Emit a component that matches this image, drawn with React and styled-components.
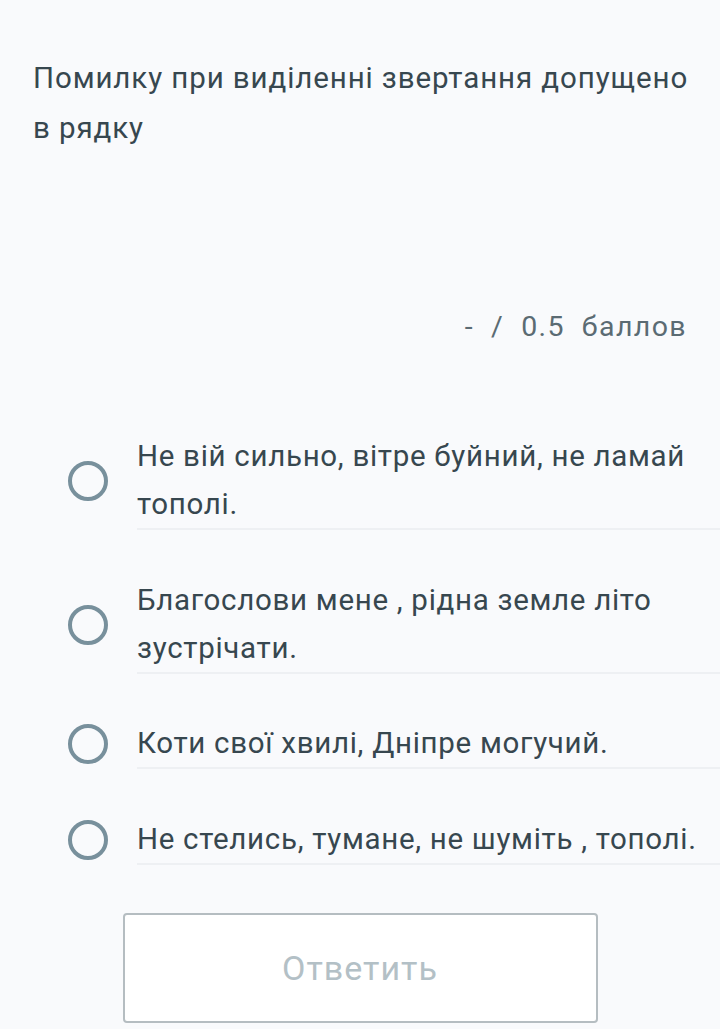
import styled, { createGlobalStyle } from "styled-components";

const GlobalStyle = createGlobalStyle`
  html, body {
    margin: 0;
    padding: 0;
    background: #f9fafc;
  }
  body {
    font-family: Roboto, "Noto Sans", sans-serif;
    -webkit-font-smoothing: antialiased;
  }
`;

const Page = styled.div`
  width: 720px;
  min-height: 1029px;
  background: #f9fafc;
  overflow: hidden;
`;

const Question = styled.div`
  padding: 53px 28px 0 33px;
  font-size: 29.5px;
  line-height: 50px;
  letter-spacing: 0.9px;
  color: #37474f;
`;

const Points = styled.div`
  margin-top: 149px;
  padding-right: 33px;
  text-align: right;
  font-size: 28.5px;
  line-height: 50px;
  letter-spacing: 1.4px;
  white-space: pre;
  color: #5b6b73;
`;

const Options = styled.div`
  margin-top: 80px;
  display: flex;
  flex-direction: column;
  gap: 45.5px;
`;

const Option = styled.label`
  display: flex;
  align-items: center;
  cursor: pointer;
`;

const RadioBox = styled.div`
  width: 137px;
  flex-shrink: 0;
  display: flex;
  padding-left: 68px;
  box-sizing: border-box;
`;

const Radio = styled.span`
  width: 40px;
  height: 40px;
  box-sizing: border-box;
  border-radius: 50%;
  border: 4px solid #78909c;
`;

const OptionText = styled.div`
  flex: 1;
  padding-right: 12px;
  font-size: 29.5px;
  line-height: 48px;
  letter-spacing: 0.7px;
  color: #37474f;
  border-bottom: 2px solid #eef0f3;
`;

const ButtonRow = styled.div`
  display: flex;
  justify-content: center;
  margin-top: 48px;
`;

const SubmitButton = styled.button`
  width: 475px;
  height: 110px;
  background: #ffffff;
  border: 2px solid #b5bdc1;
  border-radius: 4px;
  font-family: Roboto, "Noto Sans", sans-serif;
  font-size: 34px;
  letter-spacing: 1px;
  color: #b3c0c6;
`;

const answers = [
  "Не вій сильно, вітре буйний, не ламай тополі.",
  "Благослови мене , рідна земле літо зустрічати.",
  "Коти свої хвилі, Дніпре могучий.",
  "Не стелись, тумане, не шуміть , тополі.",
];

export default function App() {
  return (
    <Page>
      <GlobalStyle />
      <Question>Помилку при виділенні звертання допущено в рядку</Question>
      <Points>{"-  /  0.5  баллов"}</Points>
      <Options>
        {answers.map((a) => (
          <Option key={a}>
            <RadioBox>
              <Radio />
            </RadioBox>
            <OptionText>{a}</OptionText>
          </Option>
        ))}
      </Options>
      <ButtonRow>
        <SubmitButton>Ответить</SubmitButton>
      </ButtonRow>
    </Page>
  );
}
